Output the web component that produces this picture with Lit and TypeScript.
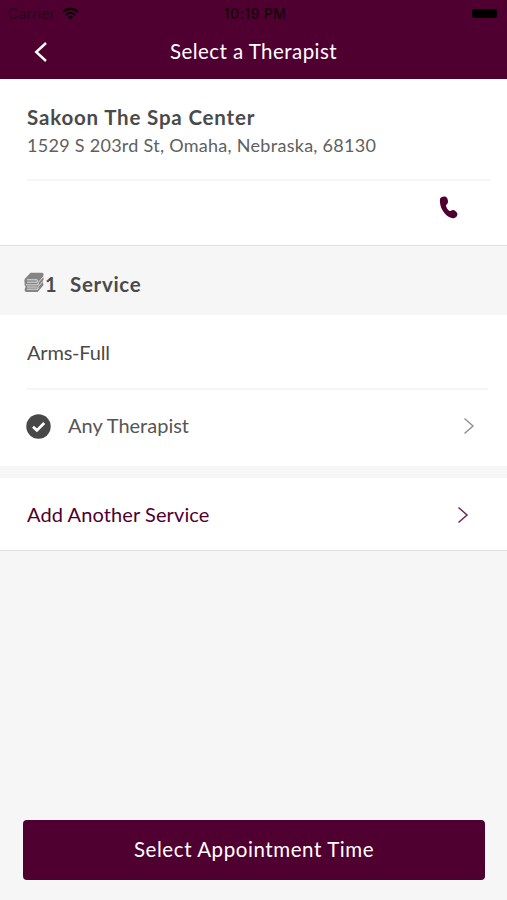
import { LitElement, html, css } from "lit";
import { customElement } from "lit/decorators.js";

@customElement("app-root")
export class AppRoot extends LitElement {
  static styles = css`
    :host {
      display: flex;
      flex-direction: column;
      height: 900px;
      background: #f6f6f6;
      color: #4a4a4a;
      font-family: Lato, "Open Sans", sans-serif;
      font-size: 20px;
      line-height: 24px;
      white-space: nowrap;
    }
    * { box-sizing: border-box; }
    svg { display: block; flex: none; }
    header { background: #500030; height: 79px; flex: none; }
    .status {
      height: 27px;
      padding: 1px 10px 0 8px;
      display: grid;
      grid-template-columns: 1fr auto 1fr;
      align-items: center;
      color: #16000d;
      font-family: Inter, "Liberation Sans", sans-serif;
      font-size: 14px;
      line-height: 26px;
    }
    .carrier { display: flex; align-items: center; gap: 7px; color: #2b001a; letter-spacing: 0.2px; }
    .carrier svg { margin-top: -2px; }
    .clock { font-weight: 600; letter-spacing: 0.35px; color: #1c0011; padding-left: 5px; }
    .battery { justify-self: end; width: 25px; height: 9px; border-radius: 2px; background: #000; margin-top: -1px; }
    .nav {
      height: 50px;
      display: grid;
      grid-template-columns: 34px 1fr 34px;
      align-items: center;
      color: #fff;
    }
    .back { padding-left: 33px; }
    .title { text-align: center; font-size: 20.5px; letter-spacing: 0.45px; position: relative; top: -1px; }
    .place { background: #fff; height: 167px; border-bottom: 1px solid #dedede; flex: none; padding: 26px 16px 0 27px; }
    .info { height: 76px; border-bottom: 2px solid #f6f6f6; }
    .name { font-weight: 700; font-size: 20.5px; letter-spacing: 0.82px; }
    .address { font-size: 18px; line-height: 24px; margin-top: 4px; letter-spacing: 0.28px; color: #606060; }
    .phone { display: flex; justify-content: flex-end; padding: 15px 33px 0 0; }
    .section { height: 69px; flex: none; display: flex; align-items: center; padding: 7px 0 0 24px; font-weight: 700; }
    .section svg { margin-top: -4px; }
    .count { margin-left: 1px; width: 25px; }
    .label { font-size: 20.5px; letter-spacing: 0.7px; }
    .card { background: #fff; flex: none; }
    .service { height: 75px; margin: 0 19px 0 27px; border-bottom: 2px solid #f6f6f6; display: flex; align-items: center; padding-top: 1px; letter-spacing: -0.2px; }
    .therapist { height: 76px; display: flex; align-items: center; padding: 0 32px 4px 26px; color: #555; }
    .any { margin-left: 17px; flex: 1; position: relative; top: -1px; }
    .add { margin-top: 12px; height: 73px; display: flex; align-items: center; padding: 0 38px 0 27px; color: #500030; border-bottom: 1px solid #dedede; letter-spacing: 0.1px; }
    .add svg { margin-top: 1px; }
    .grow { flex: 1; }
    .cta {
      margin: auto 22px 20px 23px;
      padding: 0 0 2px;
      height: 60px;
      flex: none;
      border: 0;
      border-radius: 4px;
      background: #500030;
      color: #fff;
      font: inherit;
      font-size: 20.5px;
      letter-spacing: 0.58px;
    }
  `;

  private chevron(color: string) {
    return html`<svg width="12" height="18" viewBox="0 0 12 18" fill="none" stroke=${color} stroke-width="1.5">
      <path d="M1.5 1.5L10 9L1.5 16.5" />
    </svg>`;
  }

  render() {
    return html`
      <header>
        <div class="status">
          <span class="carrier">
            <span>Carrier</span>
            <svg width="17" height="13" viewBox="0 0 17 13" fill="none" stroke="#0c0007" stroke-width="2.3">
              <path d="M1 4.8C5.2 .9 11.8 .9 16 4.8M3.8 7.8C6.5 5.3 10.5 5.3 13.2 7.8" />
              <path d="M8.5 12.5L5.9 9.8Q8.5 7.9 11.1 9.8Z" fill="#0c0007" stroke="none" />
            </svg>
          </span>
          <span class="clock">10:19 PM</span>
          <span class="battery"></span>
        </div>
        <div class="nav">
          <span class="back">
            <svg width="16" height="22" viewBox="0 0 16 22" fill="none" stroke="#fff" stroke-width="2.4">
              <path d="M13 2L3.2 11L13 20" />
            </svg>
          </span>
          <span class="title">Select a Therapist</span>
        </div>
      </header>

      <section class="place">
        <div class="info">
          <div class="name">Sakoon The Spa Center</div>
          <div class="address">1529 S 203rd St, Omaha, Nebraska, 68130</div>
        </div>
        <div class="phone">
          <svg width="19" height="24" viewBox="0 0 19 24" fill="#500030">
            <path d="M2 1.6C3.8 .4 6.6 .2 7.7 1.5C8.9 3 9.3 5.6 8.8 7C8.3 8.3 6.9 8.6 7 9.7C7.3 11.6 9.2 14.4 10.8 15C12 15.3 12.4 14 14 14C15.8 14.1 17.7 15.9 18.3 17.4C18.9 19.2 17.4 21.1 15.5 21.9C12.8 22.8 9.2 21.2 6.2 18.1C2.8 14.5 1 9.7 .9 5.6C.8 3.7 1.1 2.2 2 1.6Z" />
          </svg>
        </div>
      </section>

      <div class="section">
        <svg width="20" height="21" viewBox="0 0 20 21">
          <path d="M6.5 .7H18Q20.2 1 19.4 3.6Q18.8 5 19.6 6.4Q20 8 18.6 9Q18.7 10.5 19.4 11.8Q19.6 13.2 18.4 14.4L13.7 20H2Q.1 19.2 .8 16.8L1.7 14.4Q-.1 13.3 .8 11Q-.2 9 .9 6.8Z" fill="#858585" />
          <path d="M3 7.8H13.2V10.2H3M19.2 4.8L14.2 10.6V12.8H2M18.6 9.8L14 14.8V17.2H3M3 15H12.8" fill="none" stroke="#efefef" stroke-width=".85" />
        </svg>
        <span class="count">1</span>
        <span class="label">Service</span>
      </div>

      <section class="card">
        <div class="service">Arms-Full</div>
        <div class="therapist">
          <svg width="25" height="25" viewBox="0 0 25 25">
            <circle cx="12.5" cy="12.5" r="12.2" fill="#484848" />
            <path d="M7 12.8L10.9 16.4L18.2 9" fill="none" stroke="#fff" stroke-width="2.8" />
          </svg>
          <span class="any">Any Therapist</span>
          ${this.chevron("#929292")}
        </div>
      </section>

      <section class="card add">
        <span class="grow">Add Another Service</span>
        ${this.chevron("#6b2850")}
      </section>

      <button class="cta">Select Appointment Time</button>
    `;
  }
}
